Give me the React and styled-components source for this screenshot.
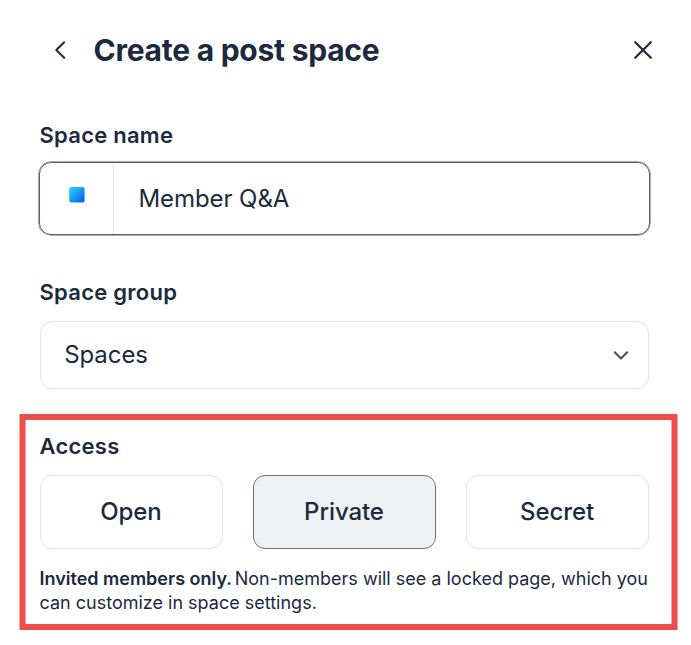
import React from 'react';
import styled, { createGlobalStyle } from 'styled-components';

const GlobalStyle = createGlobalStyle`
  * { box-sizing: border-box; }
  body { margin: 0; background: #fff; color: #1b2a3d; font-family: Inter, sans-serif; }
  button { font-family: inherit; color: inherit; padding: 0; }
`;

const Panel = styled.main`
  width: 691px;
  height: 645px;
  background: #fff;
  overflow: hidden;
`;

const Header = styled.header`
  display: flex;
  align-items: center;
  height: 120px;
  padding: 0 38px 20px 50px;
`;

const IconButton = styled.button`
  display: flex;
  border: 0;
  background: none;
`;

const Title = styled.h1`
  flex: 1;
  margin: 0 0 0 23.5px;
  font-size: 30px;
  line-height: 40px;
  font-weight: 700;
  letter-spacing: -0.25px;
`;

const Field = styled.section`
  display: flex;
  flex-direction: column;
  padding: 0 42px 0 39.5px;
  height: ${(p) => p.$height}px;
`;

const Label = styled.h2`
  margin: 0;
  font-size: 22px;
  line-height: 30px;
  font-weight: 600;
  letter-spacing: 0.25px;
`;

const NameInput = styled.div`
  display: flex;
  height: 73px;
  margin: 12px -1px 0 -0.5px;
  border: 1px solid #5b5f69;
  box-shadow: 0 0 0 0.5px #5b5f69;
  border-radius: 12px;
`;

const EmojiCell = styled.div`
  width: 74px;
  padding: 24px 0 0 29px;
  border-right: 1px solid #e4e7eb;
`;

const Value = styled.span`
  font-size: 24px;
  line-height: ${(p) => p.$line}px;
  letter-spacing: -0.08px;
  padding-left: ${(p) => p.$inset}px;
  flex: 1;
`;

const Select = styled.div`
  display: flex;
  align-items: center;
  height: 68px;
  margin: 14px 0 0 0.5px;
  padding-right: 18px;
  border: 1px solid #e3e5ea;
  border-radius: 12px;
`;

const AccessBox = styled.section`
  margin: 0 14px 0 20px;
  height: 216px;
  border: solid #ed4d4b;
  border-width: 6px 5px;
  box-shadow:
    -1px 0 0 rgba(237, 77, 75, 0.5),
    1px 0 0 rgba(237, 77, 75, 0.5),
    inset 1px 0 0 rgba(237, 77, 75, 0.5),
    inset -1px 0 0 rgba(237, 77, 75, 0.5);
  padding: 11px 0 0 14.5px;
`;

const Options = styled.div`
  display: grid;
  grid-template-columns: repeat(3, 183px);
  gap: 30px;
  margin: 14px 0 0 0.5px;
`;

const Option = styled.button`
  height: 74px;
  padding: 0 1px 2px 0;
  border: 1px solid ${(p) => (p.$selected ? '#6b717c' : '#e3e5ea')};
  border-radius: 12px;
  background: ${(p) => (p.$selected ? '#eef2f5' : '#fff')};
  font-size: 24px;
  font-weight: 500;
  letter-spacing: -0.08px;
`;

const Hint = styled.p`
  margin: 18px 0 0;
  font-size: 18px;
  line-height: 24px;
  white-space: nowrap;
`;

const Strong = styled.strong`
  font-weight: 600;
  margin-right: -2.3px;
`;

export default function App() {
  return (
    <Panel>
      <GlobalStyle />
      <Header>
        <IconButton aria-label="Back">
          <svg width="20" height="24" viewBox="0 0 20 24" fill="none" stroke="#1b2a3d" strokeWidth="2" strokeLinecap="round" strokeLinejoin="round">
            <path d="M14.2 4.2 6.3 12l7.9 7.8" />
          </svg>
        </IconButton>
        <Title>Create a post space</Title>
        <IconButton aria-label="Close">
          <svg width="20" height="20" viewBox="0 0 20 20" fill="none" stroke="#1b2a3d" strokeWidth="2.2" strokeLinecap="round">
            <path d="M2.2 2.2l15.6 15.6M17.8 2.2 2.2 17.8" />
          </svg>
        </IconButton>
      </Header>
      <Field $height={157}>
        <Label>Space name</Label>
        <NameInput>
          <EmojiCell>
            <svg width="16" height="16" viewBox="0 0 16 16" display="block">
              <defs>
                <linearGradient id="tile" x1="0" y1="0" x2="1" y2="1">
                  <stop offset="0" stopColor="#26d9fc" />
                  <stop offset="1" stopColor="#0c55f0" />
                </linearGradient>
              </defs>
              <rect x="0.2" width="15.4" height="15.6" rx="2" fill="url(#tile)" />
            </svg>
          </EmojiCell>
          <Value $line={71} $inset={24.5}>Member Q&amp;A</Value>
        </NameInput>
      </Field>
      <Field $height={137}>
        <Label>Space group</Label>
        <Select>
          <Value $line={66} $inset={23.2}>Spaces</Value>
          <svg width="18" height="18" viewBox="0 0 18 18" fill="none" stroke="#4d535f" strokeWidth="2.2" strokeLinecap="round" strokeLinejoin="round">
            <path d="m2.8 6.3 6.2 6.2 6.2-6.2" />
          </svg>
        </Select>
      </Field>
      <AccessBox>
        <Label>Access</Label>
        <Options>
          <Option>Open</Option>
          <Option $selected>Private</Option>
          <Option>Secret</Option>
        </Options>
        <Hint>
          <Strong>Invited members only.</Strong> Non-members will see a locked page, which you
          <br />
          can customize in space settings.
        </Hint>
      </AccessBox>
    </Panel>
  );
}
